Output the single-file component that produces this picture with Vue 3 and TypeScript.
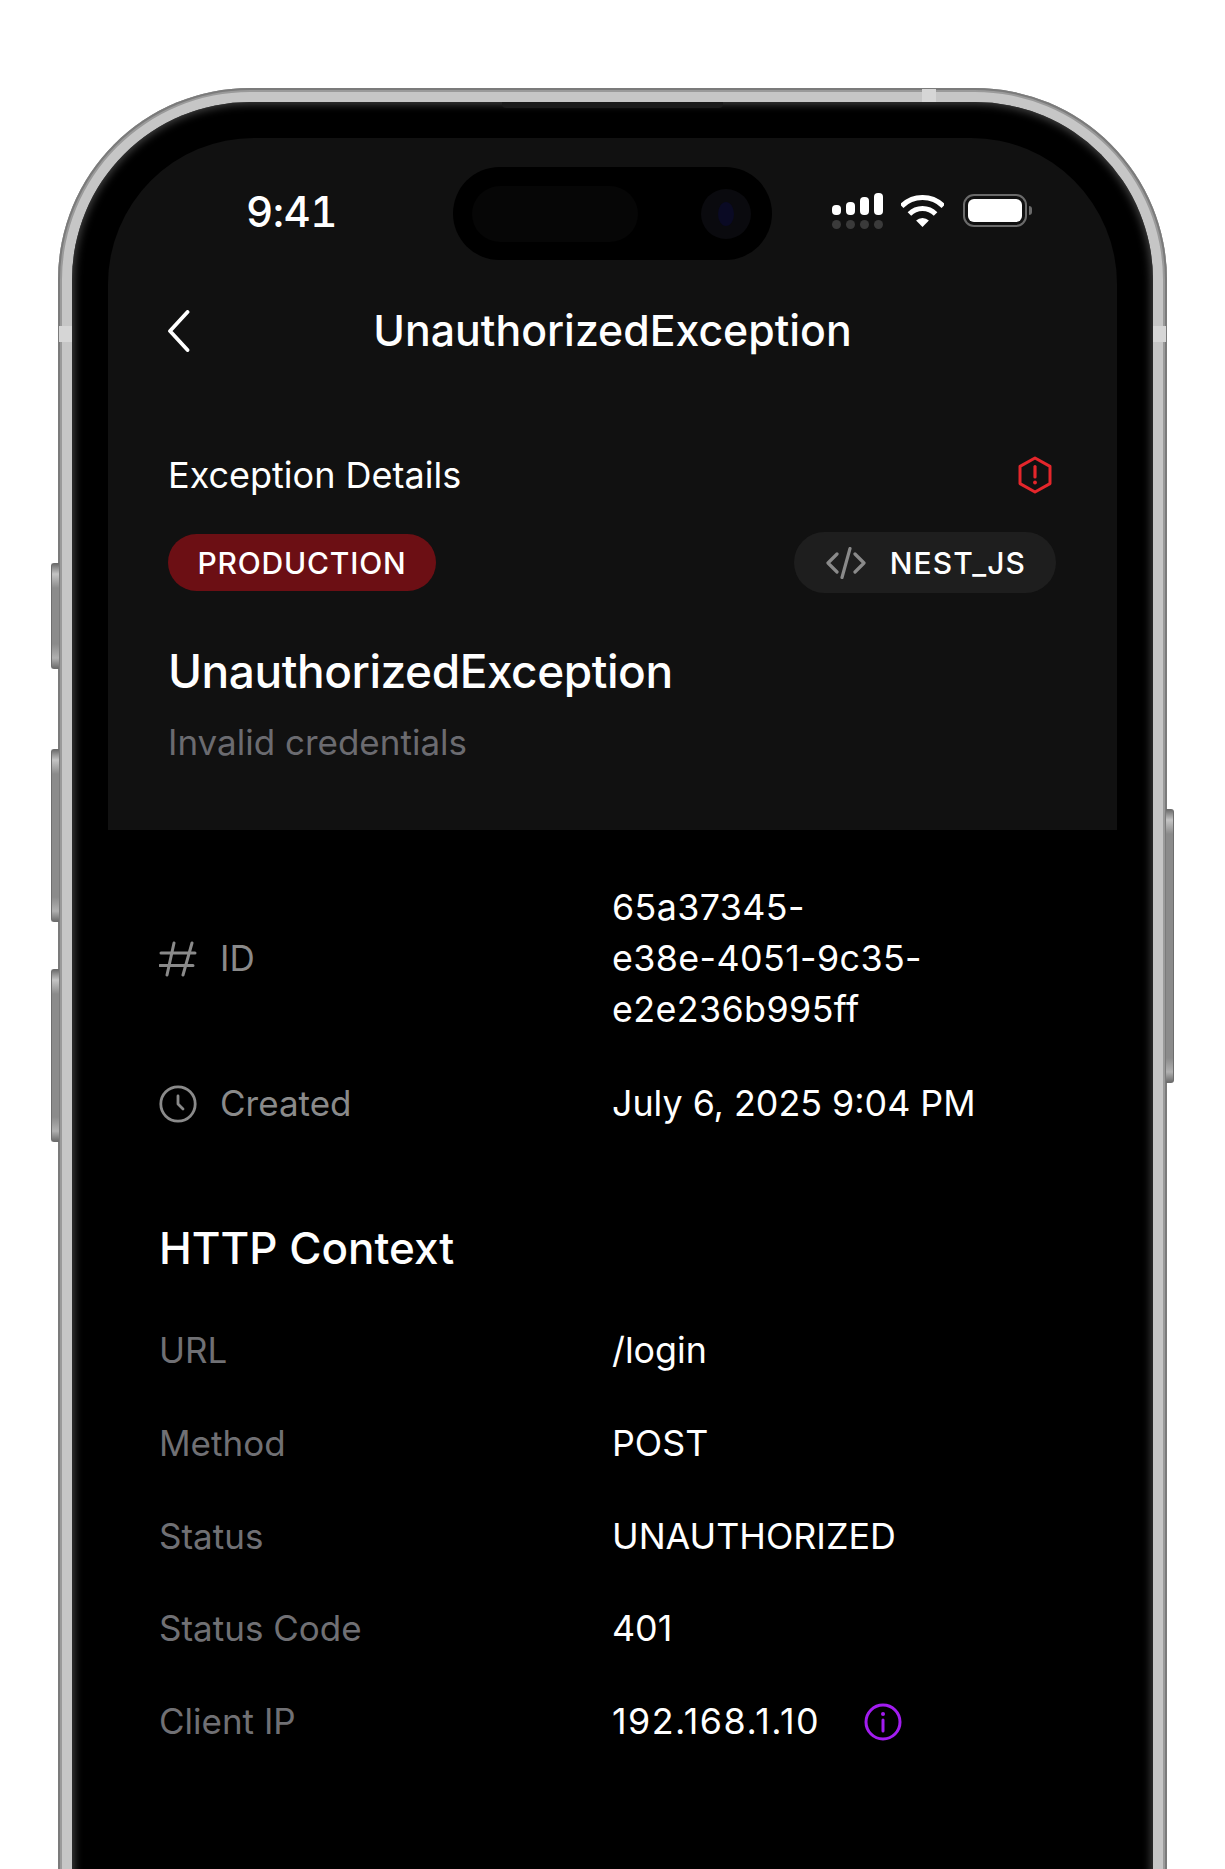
<template>
  <div class="page">
    <div class="phone">
      <span class="side-btn side-btn--mute"></span>
      <span class="side-btn side-btn--up"></span>
      <span class="side-btn side-btn--down"></span>
      <span class="side-btn side-btn--power"></span>
      <span class="band band--top"></span>
      <span class="band band--left"></span>
      <span class="band band--right"></span>

      <div class="bezel">
        <span class="speaker"></span>
        <div class="screen">
          <header class="panel">
            <div class="status">
              <div class="status__time">9:41</div>
              <div class="island">
                <span class="island__sensor"></span>
                <span class="island__camera"><i></i></span>
              </div>
              <div class="status__icons">
                <div class="signal">
                  <div class="signal__bars">
                    <span v-for="h in signalBars" :key="h" :style="{ height: h + 'px' }"></span>
                  </div>
                  <div class="signal__dots">
                    <span v-for="h in signalBars" :key="h"></span>
                  </div>
                </div>
                <svg class="wifi" width="43" height="32" viewBox="0 0 43 32" fill="none">
                  <path d="M.64 11.14A29.5 29.5 0 0 1 42.36 11.14" stroke="#fff" stroke-width="5" />
                  <path d="M8.42 18.92A18.5 18.5 0 0 1 34.58 18.92" stroke="#fff" stroke-width="5" />
                  <path d="M21.5 32 15.1 25.6A9 9 0 0 1 27.9 25.6Z" fill="#fff" />
                </svg>
                <div class="battery">
                  <div class="battery__body"><span></span></div>
                  <span class="battery__cap"></span>
                </div>
              </div>
            </div>

            <nav class="nav">
              <svg class="nav__back" width="22" height="42" viewBox="0 0 22 42" fill="none">
                <path d="M19.5 2 2 21 19.5 40" stroke="#fff" stroke-width="3.8" stroke-linecap="round" stroke-linejoin="round" />
              </svg>
              <div class="nav__title">UnauthorizedException</div>
            </nav>

            <div class="panel__body">
              <div class="panel__row">
                <span class="panel__label">Exception Details</span>
                <svg width="36" height="38" viewBox="0 0 36 38" fill="none">
                  <path d="M18 2 33 10.4V27.6L18 36 3 27.6V10.4Z" stroke="#e5262b" stroke-width="3" stroke-linejoin="round" />
                  <path d="M18 10.5V21" stroke="#e5262b" stroke-width="3.2" stroke-linecap="round" />
                  <circle cx="18" cy="26.5" r="1.9" fill="#e5262b" />
                </svg>
              </div>
              <div class="panel__pills">
                <span class="pill pill--env">PRODUCTION</span>
                <span class="pill pill--sdk">
                  <svg width="40" height="32" viewBox="0 0 40 32" fill="none">
                    <path d="M11 7 2 16l9 9M29 7l9 9-9 9" stroke="#8a8a8a" stroke-width="3.2" stroke-linecap="round" stroke-linejoin="round" />
                    <path d="M24 1.5 16 30.5" stroke="#8a8a8a" stroke-width="3.2" stroke-linecap="round" />
                  </svg>
                  NEST_JS
                </span>
              </div>
              <h1 class="panel__title">UnauthorizedException</h1>
              <p class="panel__message">Invalid credentials</p>
            </div>
          </header>

          <main class="content">
            <div class="row row--meta">
              <div class="row__label">
                <svg width="38" height="36" viewBox="0 0 38 36" fill="none">
                  <path d="M2 12H36M1 24.5H34M15 2 8 34M33 2 24 34" stroke="#8a8a8a" stroke-width="3" stroke-linecap="round" />
                </svg>
                ID
              </div>
              <div class="row__value row__value--id">
                <span v-for="part in idLines" :key="part">{{ part }}</span>
              </div>
            </div>
            <div class="row row--meta">
              <div class="row__label">
                <svg width="38" height="38" viewBox="0 0 38 38" fill="none">
                  <circle cx="19" cy="19" r="17.2" stroke="#8a8a8a" stroke-width="2.8" />
                  <path d="M19 11V19L24 24" stroke="#8a8a8a" stroke-width="2.8" stroke-linecap="round" stroke-linejoin="round" />
                </svg>
                Created
              </div>
              <div class="row__value">July 6, 2025 9:04 PM</div>
            </div>

            <h2 class="content__heading">HTTP Context</h2>

            <div class="http">
              <div v-for="item in httpRows" :key="item.label" class="row">
                <div class="row__label row__label--plain">{{ item.label }}</div>
                <div class="row__value" :class="{ 'row__value--ip': item.info }">
                  <span>{{ item.value }}</span>
                  <svg v-if="item.info" class="row__info" width="38" height="38" viewBox="0 0 38 38" fill="none">
                    <circle cx="19" cy="19" r="17" stroke="#a21cf0" stroke-width="3" />
                    <path d="M19 17V28" stroke="#a21cf0" stroke-width="3" stroke-linecap="round" />
                    <circle cx="19" cy="11" r="2" fill="#a21cf0" />
                  </svg>
                </div>
              </div>
            </div>
          </main>
        </div>
      </div>
    </div>
  </div>
</template>

<script setup lang="ts">
interface HttpRow {
  label: string;
  value: string;
  info?: boolean;
}

const signalBars: number[] = [10, 13, 18, 22];

const idLines: string[] = ['65a37345-', 'e38e-4051-9c35-', 'e2e236b995ff'];

const httpRows: HttpRow[] = [
  { label: 'URL', value: '/login' },
  { label: 'Method', value: 'POST' },
  { label: 'Status', value: 'UNAUTHORIZED' },
  { label: 'Status Code', value: '401' },
  { label: 'Client IP', value: '192.168.1.10', info: true },
];
</script>

<style>
html,
body {
  margin: 0;
  background: #fff;
}
</style>

<style scoped>
.page {
  width: 1225px;
  height: 1869px;
  box-sizing: border-box;
  padding: 88px 0 0 58px;
  overflow: hidden;
  background: #fff;
  font-family: Inter, "Liberation Sans", sans-serif;
}

.phone {
  position: relative;
  width: 1109px;
  height: 2100px;
  box-sizing: border-box;
  padding: 14px;
  border-radius: 192px;
  background: #c6c6c6;
  box-shadow: inset 0 0 0 2px #7b7b7b, inset 0 0 0 4px #9a9a9a;
}

.side-btn {
  position: absolute;
  width: 8px;
  box-sizing: border-box;
  background: linear-gradient(180deg, #6d6d6d 0, #c4c4c4 10px, #8b8b8b 24px, #8b8b8b calc(100% - 24px), #b0b0b0 calc(100% - 10px), #6d6d6d 100%);
  border: 1px solid #6d6d6d;
}

.side-btn--mute,
.side-btn--up,
.side-btn--down {
  left: -7px;
  border-right: 0;
  border-radius: 3px 0 0 3px;
}

.side-btn--mute {
  top: 475px;
  height: 106px;
}

.side-btn--up {
  top: 661px;
  height: 173px;
}

.side-btn--down {
  top: 881px;
  height: 173px;
}

.side-btn--power {
  right: -7px;
  top: 721px;
  height: 274px;
  border-left: 0;
  border-radius: 0 3px 3px 0;
}

.band {
  position: absolute;
  background: #d6d6d6;
}

.band--top {
  top: 1px;
  left: 864px;
  width: 14px;
  height: 13px;
}

.band--left {
  top: 238px;
  left: 1px;
  width: 13px;
  height: 16px;
}

.band--right {
  top: 238px;
  right: 1px;
  width: 13px;
  height: 16px;
}

.bezel {
  position: relative;
  height: 100%;
  box-sizing: border-box;
  padding: 36px 36px 0 36px;
  border-radius: 178px;
  background: #000;
  box-shadow: inset 0 0 8px 2px #444;
}

.speaker {
  position: absolute;
  top: 0;
  left: 430px;
  width: 221px;
  height: 6px;
  border-radius: 0 0 4px 4px;
  background: #1b1b1b;
}

.screen {
  height: 100%;
  border-radius: 146px 146px 0 0;
  overflow: hidden;
  background: #000;
  color: #fff;
}

.panel {
  background: #111;
}

.status {
  display: flex;
  align-items: center;
  padding-top: 29px;
}

.status__time {
  width: 345px;
  box-sizing: border-box;
  padding-left: 138px;
  margin-top: -4px;
  font-size: 42px;
  font-weight: 500;
  line-height: 50px;
  font-variant-numeric: tabular-nums;
  letter-spacing: -0.5px;
}

.island {
  position: relative;
  width: 319px;
  height: 93px;
  border-radius: 47px;
  background: #000;
}

.island__sensor {
  position: absolute;
  left: 19px;
  top: 19px;
  width: 166px;
  height: 56px;
  border-radius: 28px;
  background: #060606;
}

.island__camera {
  position: absolute;
  left: 248px;
  top: 22px;
  width: 50px;
  height: 50px;
  border-radius: 50%;
  background: #0a0a0e;
  display: flex;
  align-items: center;
  justify-content: center;
}

.island__camera i {
  width: 16px;
  height: 24px;
  border-radius: 50%;
  background: #0a0a24;
}

.status__icons {
  display: flex;
  align-items: center;
  padding-left: 60px;
  margin-top: -6px;
}

.signal {
  width: 51px;
}

.signal__bars,
.signal__dots {
  display: flex;
  justify-content: space-between;
  align-items: flex-end;
}

.signal__bars span {
  width: 9px;
  border-radius: 4px;
  background: #fff;
}

.signal__dots {
  margin-top: 5px;
}

.signal__dots span {
  width: 9px;
  height: 9px;
  border-radius: 50%;
  background: #3a3a3a;
}

.wifi {
  margin-left: 18px;
}

.battery {
  display: flex;
  align-items: center;
  margin-left: 19px;
}

.battery__body {
  width: 64px;
  height: 33px;
  box-sizing: border-box;
  padding: 3px;
  border: 2px solid #6a6a6a;
  border-radius: 11px;
}

.battery__body span {
  display: block;
  height: 100%;
  border-radius: 6px;
  background: #fff;
}

.battery__cap {
  width: 3px;
  height: 9px;
  margin-left: 2px;
  border-radius: 0 3px 3px 0;
  background: #6a6a6a;
}

.nav {
  position: relative;
  display: flex;
  justify-content: center;
  align-items: center;
  height: 50px;
  margin-top: 46px;
}

.nav__back {
  position: absolute;
  left: 60px;
  top: 4px;
}

.nav__title {
  font-size: 42.8px;
  font-weight: 500;
  line-height: 50px;
}

.panel__body {
  padding: 97px 61px 66px 60px;
}

.panel__row {
  display: flex;
  justify-content: space-between;
  align-items: center;
  height: 44px;
  padding-right: 3px;
}

.panel__label {
  font-size: 36px;
  line-height: 44px;
}

.panel__pills {
  display: flex;
  justify-content: space-between;
  align-items: center;
  height: 61px;
  margin-top: 35px;
}

.pill {
  display: inline-flex;
  align-items: center;
  border-radius: 31px;
  font-size: 30px;
  font-weight: 500;
  letter-spacing: 0.8px;
}

.pill--env {
  height: 57px;
  padding: 0 29px 0 29.5px;
  background: #6c0f14;
}

.pill--sdk {
  height: 61px;
  gap: 24px;
  padding: 0 30px 0 32px;
  letter-spacing: 1.1px;
  background: #1e1e1e;
}

.panel__title {
  margin: 50px 0 0;
  font-size: 46px;
  font-weight: 500;
  line-height: 56px;
  letter-spacing: -0.45px;
}

.panel__message {
  margin: 21px 0 0;
  font-size: 35px;
  line-height: 44px;
  color: #6b6b70;
}

.content {
  padding: 52px 0 0 51px;
}

.content__heading {
  margin: 91px 0 49px;
  font-size: 44px;
  font-weight: 500;
  line-height: 56px;
}

.row {
  display: grid;
  grid-template-columns: 453px 440px;
  align-items: center;
}

.row--meta + .row--meta {
  margin-top: 43px;
}

.http {
  display: flex;
  flex-direction: column;
  gap: 41.8px;
}

.row__label {
  display: flex;
  align-items: center;
  gap: 23px;
  font-size: 35px;
  line-height: 51px;
  color: #8a8a8a;
}

.row__label--plain {
  color: #707074;
}

.row__value {
  display: flex;
  align-items: center;
  gap: 44px;
  font-size: 35.8px;
  line-height: 51px;
}

.row__value--id {
  display: block;
  letter-spacing: 0.4px;
}

.row__value--id span {
  display: block;
}

.row__value--ip span {
  letter-spacing: 1.5px;
}

.row__info {
  flex: none;
}
</style>
